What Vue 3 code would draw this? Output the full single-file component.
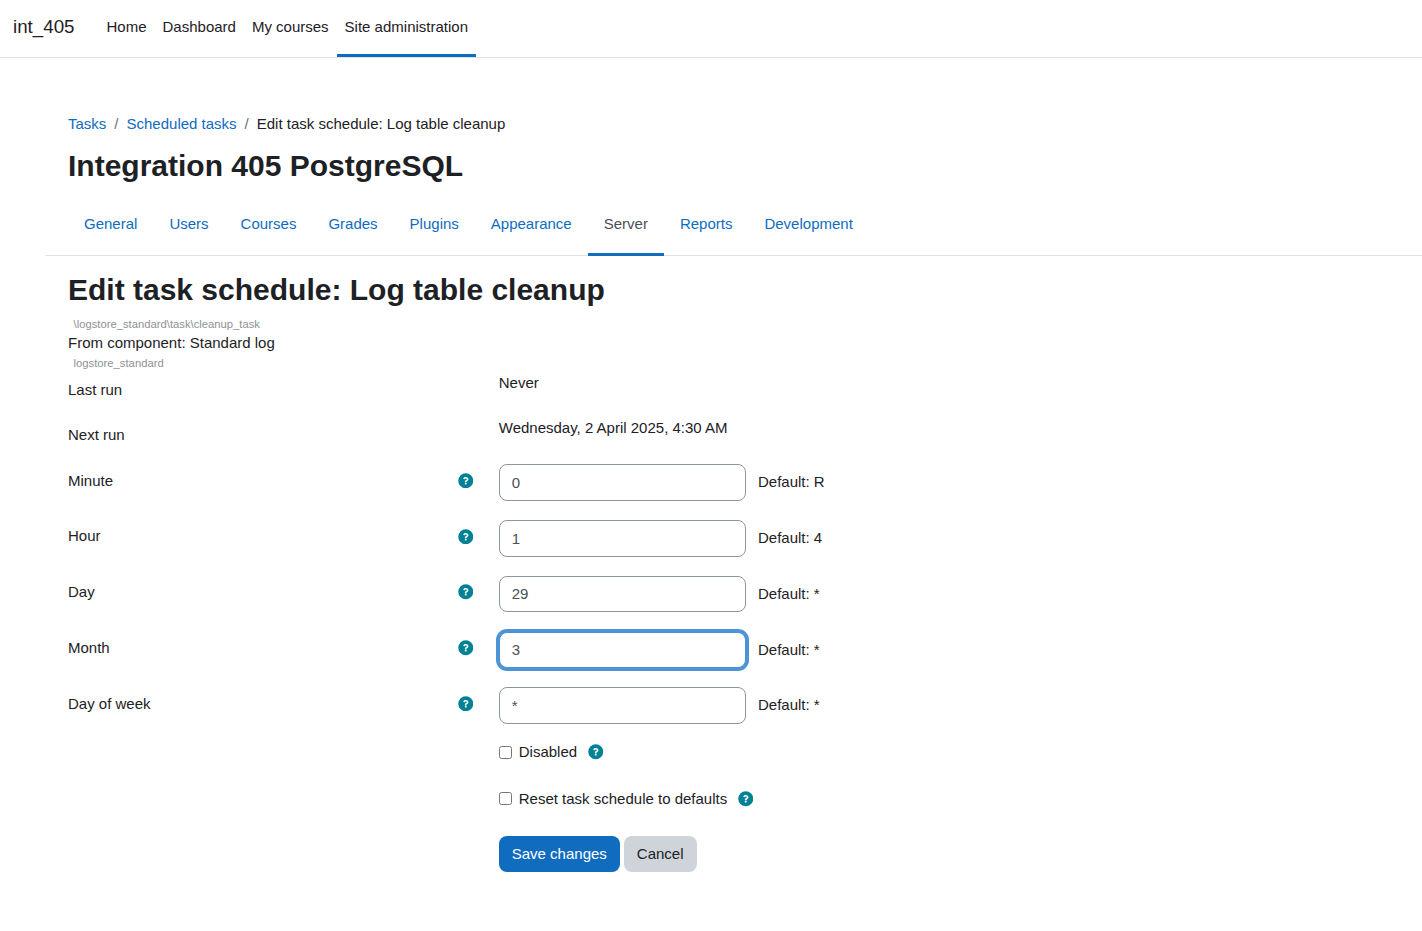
<script setup>
const navItems = [
  { label: 'Home', active: false },
  { label: 'Dashboard', active: false },
  { label: 'My courses', active: false },
  { label: 'Site administration', active: true },
]
const tabs = ['General', 'Users', 'Courses', 'Grades', 'Plugins', 'Appearance', 'Server', 'Reports', 'Development']
const fields = [
  { label: 'Minute', value: '0', def: 'Default: R', focus: false },
  { label: 'Hour', value: '1', def: 'Default: 4', focus: false },
  { label: 'Day', value: '29', def: 'Default: *', focus: false },
  { label: 'Month', value: '3', def: 'Default: *', focus: true },
  { label: 'Day of week', value: '*', def: 'Default: *', focus: false },
]
const markPath = 'M262.655 90c-54.497 0-89.255 22.957-116.549 63.758-3.536 5.286-2.353 12.415 2.715 16.258l34.699 26.31c5.205 3.947 12.621 3.008 16.665-2.122 17.864-22.658 30.113-35.797 57.303-35.797 20.429 0 45.698 13.148 45.698 32.958 0 14.976-12.363 22.667-32.534 33.976C247.128 238.528 216 254.941 216 296v4c0 6.627 5.373 12 12 12h56c6.627 0 12-5.373 12-12v-1.333c0-28.462 83.186-29.647 83.186-106.667 0-58.002-60.165-102-116.531-102zM256 338c-25.365 0-46 20.635-46 46 0 25.364 20.635 46 46 46s46-20.636 46-46c0-25.365-20.635-46-46-46z'
</script>

<template>
  <div class="page">
    <header class="navbar">
      <a class="brand">int_405</a>
      <nav class="nav">
        <a v-for="n in navItems" :key="n.label" class="nav-item" :class="{ active: n.active }">{{ n.label }}</a>
      </nav>
    </header>

    <div class="head">
      <ol class="crumbs">
        <li><a class="link">Tasks</a></li>
        <li class="sep">/</li>
        <li><a class="link">Scheduled tasks</a></li>
        <li class="sep">/</li>
        <li>Edit task schedule: Log table cleanup</li>
      </ol>
      <h1 class="site-title">Integration 405 PostgreSQL</h1>
    </div>

    <nav class="tabs">
      <a v-for="t in tabs" :key="t" class="tab" :class="{ active: t === 'Server' }">{{ t }}</a>
    </nav>

    <main class="main">
      <h2 class="page-title">Edit task schedule: Log table cleanup</h2>
      <div class="small first">\logstore_standard\task\cleanup_task</div>
      <div class="from">From component: Standard log</div>
      <div class="small second">logstore_standard</div>

      <form class="form" @submit.prevent>
        <div class="row static">
          <div class="label">Last run</div>
          <div class="value">Never</div>
        </div>
        <div class="row static">
          <div class="label">Next run</div>
          <div class="value">Wednesday, 2 April 2025, 4:30 AM</div>
        </div>

        <div class="fields">
          <div v-for="f in fields" :key="f.label" class="row field">
            <div class="label">
              <span>{{ f.label }}</span>
              <svg class="help" viewBox="0 0 512 512">
                <circle cx="256" cy="256" r="248" />
                <path class="mark" transform="translate(256 256) scale(.74) translate(-256 -260)" :d="markPath" />
              </svg>
            </div>
            <div class="control">
              <input class="input" :class="{ focus: f.focus }" type="text" :value="f.value" />
              <span class="def">{{ f.def }}</span>
            </div>
          </div>
        </div>

        <div class="row check first-check">
          <div class="label"></div>
          <label class="control">
            <input class="cb" type="checkbox" />
            <span>Disabled</span>
            <svg class="help after" viewBox="0 0 512 512">
              <circle cx="256" cy="256" r="248" />
              <path class="mark" transform="translate(256 256) scale(.74) translate(-256 -260)" :d="markPath" />
            </svg>
          </label>
        </div>
        <div class="row check">
          <div class="label"></div>
          <label class="control">
            <input class="cb" type="checkbox" />
            <span>Reset task schedule to defaults</span>
            <svg class="help after" viewBox="0 0 512 512">
              <circle cx="256" cy="256" r="248" />
              <path class="mark" transform="translate(256 256) scale(.74) translate(-256 -260)" :d="markPath" />
            </svg>
          </label>
        </div>

        <div class="row actions">
          <div class="label"></div>
          <div class="control">
            <button class="btn primary" type="button">Save changes</button>
            <button class="btn secondary" type="button">Cancel</button>
          </div>
        </div>
      </form>
    </main>
  </div>
</template>

<style>
html, body { margin: 0; background: #fff; }
</style>

<style scoped>
.page {
  font-family: "Liberation Sans", Arial, sans-serif;
  font-size: 15px;
  line-height: 22.5px;
  color: #1d2125;
  min-height: 931px;
  box-sizing: border-box;
}
.navbar {
  display: flex;
  align-items: stretch;
  height: 58px;
  box-sizing: border-box;
  border-bottom: 1px solid #dee2e6;
  padding-left: 13px;
}
.brand {
  font-size: 18.75px;
  line-height: 54px;
  margin-right: 24px;
}
.nav { display: flex; }
.nav-item {
  padding: 0 8px;
  line-height: 54px;
  height: 57px;
  box-sizing: border-box;
  border-bottom: 3px solid transparent;
}
.nav-item.active { border-bottom-color: #0f6cbf; }
.head { padding: 55px 68px 0; }
.crumbs {
  display: flex;
  list-style: none;
  margin: 0;
  padding: 0;
}
.sep { padding: 0 8px; color: #6a737b; }
.link { color: #0f6cbf; }
.site-title {
  font-size: 30px;
  line-height: 36px;
  font-weight: 700;
  margin: 12.5px 0 0;
}
.tabs {
  display: flex;
  margin: 15.5px 0 0 45px;
  padding-left: 23px;
  border-bottom: 1px solid #dee2e6;
}
.tab {
  color: #0f6cbf;
  padding: 0 16px;
  height: 56px;
  line-height: 48px;
  box-sizing: border-box;
  margin-bottom: -1px;
  border-bottom: 3px solid transparent;
}
.tab.active { color: #495057; border-bottom-color: #0f6cbf; }
.main { padding: 0 68px; }
.page-title {
  font-size: 30px;
  line-height: 36px;
  font-weight: 700;
  margin: 16px 0 0;
}
.small {
  font-size: 11.25px;
  line-height: 16px;
  color: #8e9297;
  padding-left: 5.6px;
}
.small.first { margin-top: 8px; }
.small.second { margin-top: 1px; }
.row { display: flex; }
.label {
  width: 405px;
  flex: none;
  display: flex;
  justify-content: space-between;
  align-items: flex-start;
}
.control {
  margin-left: 25.75px;
  display: flex;
  align-items: center;
}
.static { height: 45px; }
.static .label { padding-top: 8px; }
.static .value { margin-left: 25.75px; padding-top: 1px; }
.fields { margin-top: 3.25px; }
.field { height: 55.75px; }
.field .label { padding-top: 5.35px; }
.field .control { align-items: flex-start; }
.help {
  width: 15.5px;
  height: 15.5px;
  fill: #008196;
  flex: none;
  margin-top: 3.35px;
}
.mark { fill: #fff; }
.help.after { margin: 0 0 0 10.75px; }
.input {
  width: 247px;
  height: 36.5px;
  box-sizing: border-box;
  padding: 5.8px 12px 6px;
  border: 1px solid #8f959e;
  border-radius: 8px;
  font: inherit;
  color: #495057;
  background: #fff;
  outline: none;
}
.input.focus {
  border-color: #4a90d5;
  box-shadow: 0 0 0 3px #4d94d6;
}
.def { margin-left: 12.25px; line-height: 35.4px; }
.cb {
  width: 13px;
  height: 13px;
  margin: 0 7px 0 0;
}
.check { height: 46.75px; }
.first-check { margin-top: -14.25px; }
.actions { margin-top: 13.5px; }
.btn {
  font: inherit;
  height: 36.5px;
  padding: 0 12px;
  border: 1px solid transparent;
  border-radius: 8px;
  box-sizing: border-box;
}
.primary { background: #0f6cbf; color: #fff; }
.secondary { background: #ced4da; color: #1d2125; margin-left: 4px; }
</style>
